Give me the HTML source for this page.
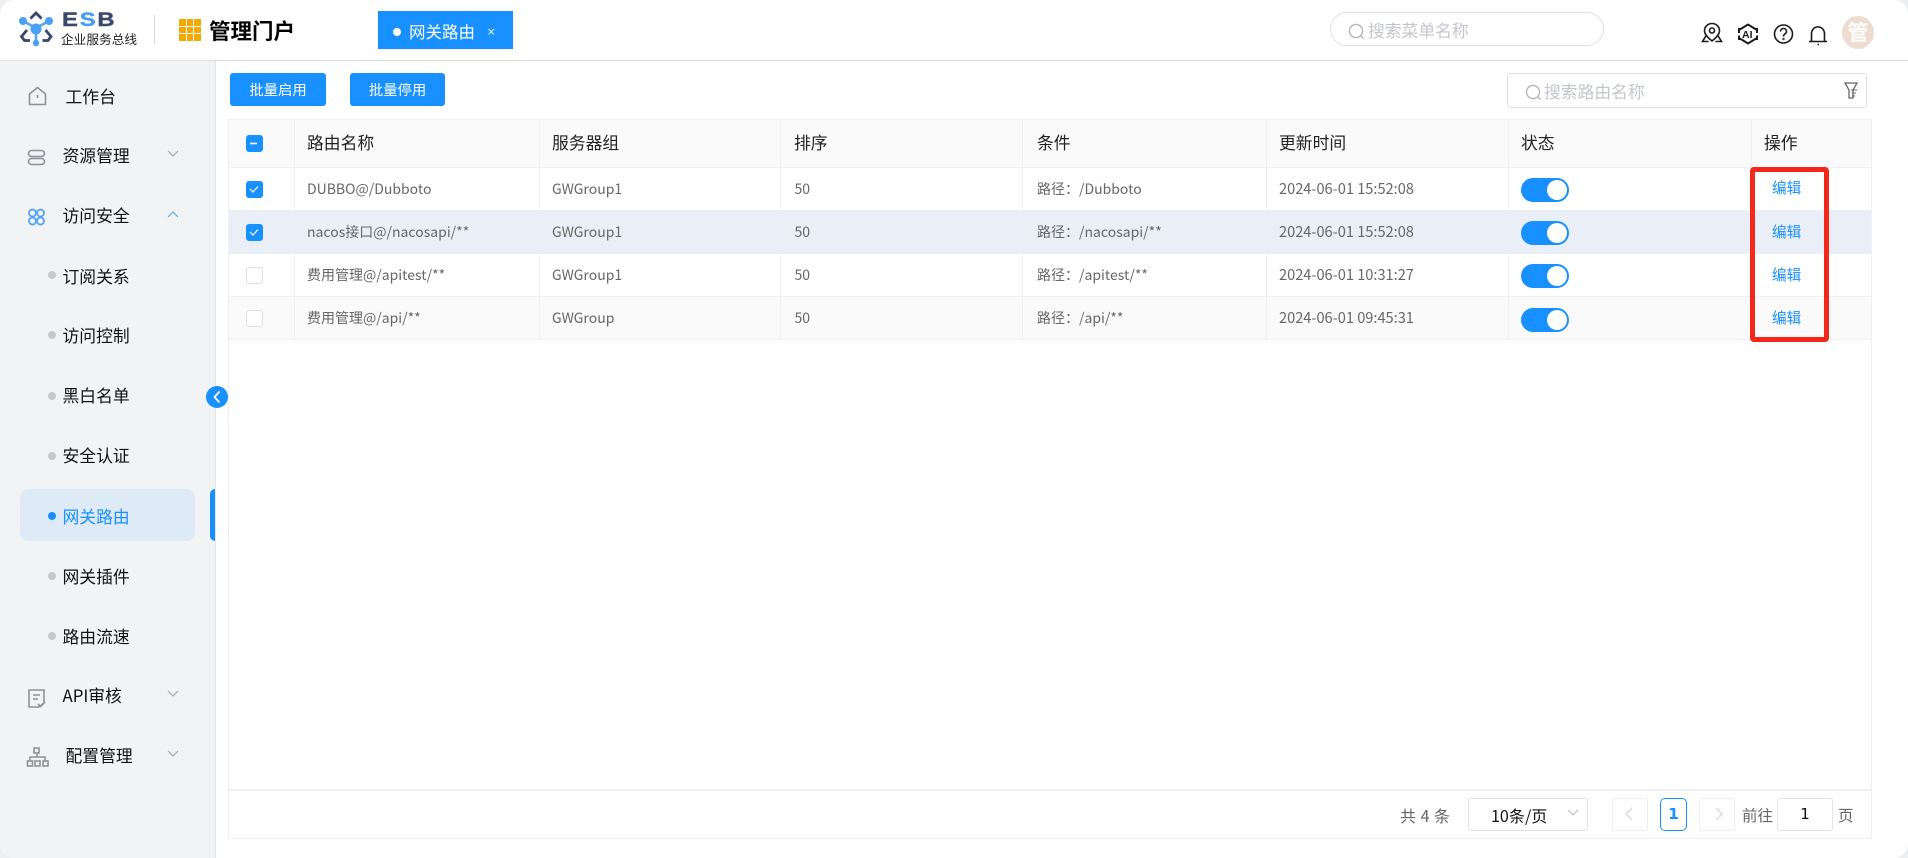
<!DOCTYPE html>
<html lang="zh"><head><meta charset="utf-8"><title>网关路由</title>
<style>
html,body{margin:0;padding:0;width:1908px;height:858px;overflow:hidden;background:#eceef1}
#p{position:relative;width:1908px;height:858px;background:#fff;border-radius:14px;overflow:hidden}
#p,.n{font-family:"Noto Sans CJK SC","Liberation Sans",sans-serif}
.a{position:absolute}
.t{position:absolute;white-space:nowrap;line-height:24px;height:24px}
.m{font-size:16.8px;color:#111;left:62.500px}
.d{position:absolute;left:47.500px;width:8px;height:8px;border-radius:50%;background:#c6c8cc}
.h{font-size:16.8px;color:#222;top:130px}
.c{font-size:14px;color:#666}
.dt{font-size:14.6px;color:#666;left:1279px}
.e{font-size:14.600px;color:#1890ff;left:1772px}
.b{position:absolute;top:73px;height:33px;background:#1890ff;border-radius:3px;color:#fff;font-size:14.400px;line-height:33px;text-align:center}
.k{position:absolute;left:246px;width:15px;height:15px;border:1px solid #dcdfe6;border-radius:3px;background:#fff}
.k.on{background:#1890ff;border-color:#1890ff}
.s{position:absolute;left:1521px;width:48px;height:24px;border-radius:12px;background:#1890ff}
.s:after{content:"";position:absolute;right:2.500px;top:2px;width:20px;height:20px;border-radius:50%;background:#fff}
.r{position:absolute;left:229px;width:1642px;background:#fff}
.v{position:absolute;width:1px;background:#eef0f5}
.l{position:absolute;left:228px;width:1644px;height:1px;background:#eef0f5}
.pb{position:absolute;top:798px;height:31px;border:1px solid #e2e4e9;border-radius:3px;background:#fff}
</style></head><body><div id="p">

<!-- header -->
<div class="a" style="left:0;top:60px;width:1908px;height:1px;background:#dcdcdc"></div>
<div class="t" style="left:62px;top:8px;font:bold 19.500px/24px 'Liberation Sans',sans-serif;letter-spacing:1.500px;color:#3b4a6b;transform:scaleX(1.220);transform-origin:left;-webkit-text-stroke:.4px currentColor">E<span style="color:#4a9cf5">S</span>B</div>
<div class="t" style="left:61px;top:27px;font-size:12.700px;color:#222">企业服务总线</div>
<div class="a" style="left:154px;top:15px;width:1px;height:29px;background:#d8d8d8"></div>
<div class="a" style="left:179px;top:19px;width:22px;height:22px;display:grid;grid-template-columns:repeat(3,1fr);grid-template-rows:repeat(3,1fr);gap:1px">
<i style="background:#f5a800"></i><i style="background:#f5a800"></i><i style="background:#f5a800"></i><i style="background:#f5a800"></i><i style="background:#f5a800"></i><i style="background:#f5a800"></i><i style="background:#f5a800"></i><i style="background:#f5a800"></i><i style="background:#f5a800"></i></div>
<div class="t" style="left:209px;top:19px;font-size:21.500px;font-weight:700;color:#000">管理门户</div>
<div class="a" style="left:378px;top:11px;width:135px;height:38px;background:#1890ff"></div>
<div class="a" style="left:393px;top:28px;width:8px;height:8px;border-radius:50%;background:#fff"></div>
<div class="t" style="left:409px;top:19px;font-size:16.500px;color:#fff">网关路由</div>
<div class="a" style="left:1330px;top:12px;width:272px;height:32px;border:1px solid #dcdfe6;border-radius:17px"></div>
<div class="t" style="left:1368px;top:18px;font-size:16.800px;color:#c3c6cc">搜索菜单名称</div>
<div class="a" style="left:1842px;top:16px;width:32px;height:33px;border-radius:50%;background:#eddccf;color:#fff;font-size:21px;font-weight:700;line-height:33px;text-align:center">管</div>

<!-- sidebar -->
<div class="a" style="left:0;top:61px;width:215px;height:797px;background:#f1f3f5;border-right:1px solid #e3e5ea"></div>
<div class="a" style="left:20px;top:489px;width:175px;height:52px;border-radius:9px;background:#deeaf6"></div>
<div class="a" style="left:210px;top:489px;width:5px;height:52px;border-radius:6px 0 0 6px;background:#1890ff"></div>
<div class="t m" style="left:65.500px;top:84px">工作台</div>
<div class="t m" style="top:143px">资源管理</div>
<div class="t m" style="top:203px">访问安全</div>
<div class="d" style="top:271px"></div><div class="t m" style="top:264px">订阅关系</div>
<div class="d" style="top:331px"></div><div class="t m" style="top:323px">访问控制</div>
<div class="d" style="top:392px"></div><div class="t m" style="top:383px">黑白名单</div>
<div class="d" style="top:452px"></div><div class="t m" style="top:443px">安全认证</div>
<div class="d" style="top:512px;background:#1890ff"></div><div class="t m" style="top:504px;color:#1890ff">网关路由</div>
<div class="d" style="top:572px"></div><div class="t m" style="top:564px">网关插件</div>
<div class="d" style="top:632px"></div><div class="t m" style="top:624px">路由流速</div>
<div class="t m" style="top:683px">API审核</div>
<div class="t m" style="left:65.500px;top:743px">配置管理</div>

<!-- toolbar -->
<div class="b" style="left:230px;width:96px">批量启用</div>
<div class="b" style="left:350px;width:95px">批量停用</div>
<div class="a" style="left:1507px;top:73px;width:358px;height:33px;border:1px solid #dcdfe6;border-radius:3px"></div>
<div class="t" style="left:1544px;top:79px;font-size:16.800px;color:#c3c6cc">搜索路由名称</div>

<!-- table backgrounds -->
<div class="r" style="top:120px;height:47px;background:#fafafa"></div>
<div class="r" style="top:210px;height:44px;background:#eaeef7"></div>
<div class="r" style="top:297px;height:42px;background:#fafafa"></div>
<!-- lines -->
<div class="l" style="top:119px"></div><div class="l" style="top:167px"></div><div class="l" style="top:296px"></div><div class="l" style="top:339px"></div>
<div class="l" style="top:789px;height:2px"></div><div class="l" style="top:838px"></div>
<div class="v" style="left:228px;top:119px;height:720px"></div><div class="v" style="left:1871px;top:119px;height:720px"></div>
<div class="v" style="left:294px;top:119px;height:91px"></div><div class="v" style="left:294px;top:254px;height:85px"></div>
<div class="v" style="left:539px;top:119px;height:91px"></div><div class="v" style="left:539px;top:254px;height:85px"></div>
<div class="v" style="left:780px;top:119px;height:91px"></div><div class="v" style="left:780px;top:254px;height:85px"></div>
<div class="v" style="left:1022px;top:119px;height:91px"></div><div class="v" style="left:1022px;top:254px;height:85px"></div>
<div class="v" style="left:1266px;top:119px;height:91px"></div><div class="v" style="left:1266px;top:254px;height:85px"></div>
<div class="v" style="left:1508px;top:119px;height:91px"></div><div class="v" style="left:1508px;top:254px;height:85px"></div>
<div class="v" style="left:1751px;top:119px;height:91px"></div><div class="v" style="left:1751px;top:254px;height:85px"></div>

<!-- table head -->
<div class="k on" style="top:135px"></div>
<div class="t h" style="left:307px">路由名称</div><div class="t h" style="left:552px">服务器组</div><div class="t h" style="left:794px">排序</div><div class="t h" style="left:1037px">条件</div><div class="t h" style="left:1279px">更新时间</div><div class="t h" style="left:1521px">状态</div><div class="t h" style="left:1764px">操作</div>

<!-- rows -->
<div class="k on" style="top:181px"></div>
<div class="t c" style="left:307px;top:177px">DUBBO@/Dubboto</div><div class="t c" style="left:552px;top:177px">GWGroup1</div><div class="t c" style="left:794.500px;top:177px">50</div><div class="t c" style="left:1037px;top:177px">路径：/Dubboto</div><div class="t dt" style="top:177px">2024-06-01 15:52:08</div><div class="s" style="top:178px"></div><div class="t e" style="top:176px">编辑</div>

<div class="k on" style="top:224px"></div>
<div class="t c" style="left:307px;top:220px">nacos接口@/nacosapi/**</div><div class="t c" style="left:552px;top:220px">GWGroup1</div><div class="t c" style="left:794.500px;top:220px">50</div><div class="t c" style="left:1037px;top:220px">路径：/nacosapi/**</div><div class="t dt" style="top:220px">2024-06-01 15:52:08</div><div class="s" style="top:221px"></div><div class="t e" style="top:220px">编辑</div>

<div class="k" style="top:267px"></div>
<div class="t c" style="left:307px;top:263px">费用管理@/apitest/**</div><div class="t c" style="left:552px;top:263px">GWGroup1</div><div class="t c" style="left:794.500px;top:263px">50</div><div class="t c" style="left:1037px;top:263px">路径：/apitest/**</div><div class="t dt" style="top:263px">2024-06-01 10:31:27</div><div class="s" style="top:264px"></div><div class="t e" style="top:263px">编辑</div>

<div class="k" style="top:310px"></div>
<div class="t c" style="left:307px;top:306px">费用管理@/api/**</div><div class="t c" style="left:552px;top:306px">GWGroup</div><div class="t c" style="left:794.500px;top:306px">50</div><div class="t c" style="left:1037px;top:306px">路径：/api/**</div><div class="t dt" style="top:306px">2024-06-01 09:45:31</div><div class="s" style="top:308px"></div><div class="t e" style="top:306px">编辑</div>

<!-- red annotation -->
<div class="a" style="left:1749.500px;top:167px;width:69px;height:165px;border:5px solid #f5261a;border-radius:4px;box-sizing:content-box"></div>

<!-- pagination -->
<div class="t" style="left:1400px;top:803px;font-size:16px;color:#666;word-spacing:1px">共 4 条</div>
<div class="pb" style="left:1468px;width:118px"></div>
<div class="t" style="left:1491px;top:803px;font-size:16.100px;color:#111">10条/页</div>
<div class="pb" style="left:1612px;width:34px;border-color:#eceef2"></div>
<div class="pb" style="left:1660px;width:25px;border-color:#1890ff;border-radius:5px;color:#1890ff;font:bold 15.500px/31px 'DejaVu Sans',sans-serif;text-align:center">1</div>
<div class="pb" style="left:1699px;width:34px;border-color:#eceef2"></div>
<div class="t" style="left:1742px;top:803px;font-size:15.500px;color:#666">前往</div>
<div class="pb" style="left:1777px;width:54px;color:#111;font:15px/31px 'DejaVu Sans',sans-serif;text-align:center">1</div>
<div class="t" style="left:1838px;top:803px;font-size:15.500px;color:#666">页</div>

<!-- collapse button + all icons -->
<svg class="a" style="left:0;top:0" width="1908" height="858" viewBox="0 0 1908 858" fill="none">
<!-- logo -->
<g stroke="#55a5f5" stroke-width="2.600"><path d="M23 21L36 28L49 21M36 28V43"/></g>
<g fill="#4aa0f7"><circle cx="23" cy="21" r="4"/><circle cx="49" cy="21" r="4"/><circle cx="36" cy="29" r="5.500"/><circle cx="36" cy="43" r="3.200"/></g>
<g stroke="#34466b" stroke-width="2.800"><path d="M30.500 18.500L36 13L41.500 18.500"/><path d="M27 30L21.500 36.500L24.500 40.500H30"/><path d="M45.500 30L51 36.500L48 40.500H42.500"/></g>
<!-- tab close -->
<path d="M488.500 29L494 34.500M494 29L488.500 34.500" stroke="#d5e8ff" stroke-width="1.200"/>
<!-- top icons -->
<g stroke="#1a1a1a" stroke-width="1.600">
<path d="M1712 23.500c-4.500 0-7.500 3.300-7.500 7.200 0 4 4.200 7.600 7.500 10.300 3.300-2.700 7.500-6.300 7.500-10.300 0-3.900-3-7.200-7.500-7.200z"/><circle cx="1712" cy="30.500" r="2.500"/><path d="M1706.500 35L1702.500 41.500H1708.500M1717.500 35L1721.500 41.500H1715.500"/>
<path d="M1739 30L1748 24.500L1757 30M1739 38L1748 43.500L1757 38M1739 28V33M1739 35.500V40M1757 28V33M1757 35.500V40" stroke-width="2"/>
<circle cx="1783.500" cy="34" r="9"/><path d="M1780.500 31.500c0-4 6-4 6 0 0 2.300-3 2.300-3 5"/><circle cx="1783.500" cy="39" r=".4"/>
<path d="M1811.500 41V34c0-9.500 13-9.500 13 0v7M1809 41.500H1827M1817.500 44.500h1.500"/>
</g>
<text x="1742" y="38" font-family="'Liberation Sans',sans-serif" font-weight="700" font-size="10.500" fill="#1a1a1a">AI</text>
<!-- search icons -->
<g stroke="#b4b7bd" stroke-width="1.400"><circle cx="1356" cy="31" r="6.500"/><path d="M1361 36l2.500 2.500"/><circle cx="1533" cy="92" r="6.500"/><path d="M1538 97l2.500 2.500"/></g>
<!-- filter -->
<path d="M1845 83H1857L1853 90V98H1849V90Z" stroke="#666" stroke-width="1.300"/><path d="M1851 90h6M1852 93h4M1852 96h3" stroke="#666" stroke-width="1"/>
<!-- sidebar icons -->
<g stroke="#8e9298" stroke-width="1.600">
<path d="M29.500 94L37.500 87.500L45.500 94V104.500H29.500Z"/><path d="M37.500 95v3"/>
<rect x="28.500" y="150.500" width="16" height="6" rx="3"/><rect x="28.500" y="158.500" width="16" height="6" rx="3"/>
<path d="M29 690H44V703L39 707H29ZM33 695H40M33 699H38M38 704l2.500 2.500L45 702"/>
<rect x="34" y="748" width="5" height="5"/><rect x="27.500" y="761" width="5" height="5"/><rect x="35" y="761" width="5" height="5"/><rect x="43" y="761" width="5" height="5"/><path d="M37 753V757M30 761V757H45V761"/>
</g>
<g stroke="#4da1fb" stroke-width="1.700"><circle cx="32.500" cy="213" r="3.500"/><circle cx="40.500" cy="213" r="3.500"/><circle cx="32.500" cy="221" r="3.500"/><circle cx="40.500" cy="221" r="3.500"/></g>
<!-- chevrons -->
<g stroke="#a4a8ae" stroke-width="1.200"><path d="M168 151L173 156L178 151M168 691L173 696L178 691M168 751L173 756L178 751"/></g>
<path d="M168 217L173 212L178 217" stroke="#5da9fb" stroke-width="1.200"/>
<!-- collapse -->
<circle cx="217" cy="397" r="11" fill="#1890ff"/><path d="M219.500 391.500L214.500 397L219.500 402.500" stroke="#fff" stroke-width="1.800"/>
<!-- checks -->
<path d="M250 143.500h7" stroke="#fff" stroke-width="1.600"/>
<g stroke="#fff" stroke-width="1.200"><path d="M250 189l3 3 5-5.500M250 232l3 3 5-5.500"/></g>
<!-- pagination icons -->
<g stroke="#dfe3ea" stroke-width="2"><path d="M1632 808L1626 814L1632 820M1716 808L1722 814L1716 820"/></g>
<path d="M1568 810L1573 815L1578 810" stroke="#c4c7cc" stroke-width="1.300"/>
</svg>
</div></body></html>
